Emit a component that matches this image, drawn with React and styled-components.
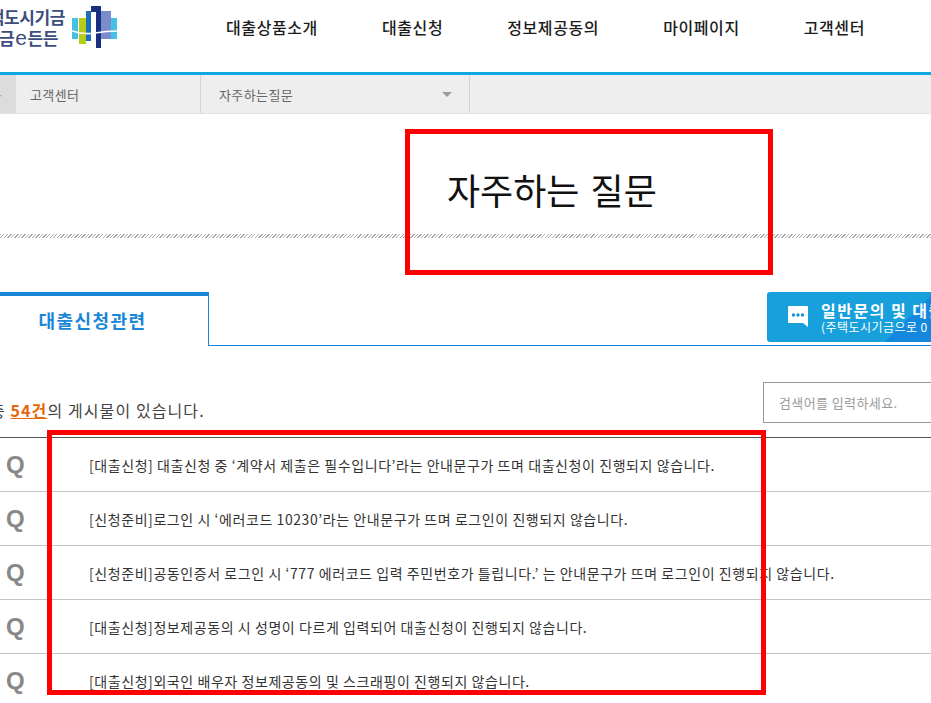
import React from "react";
import styled, { createGlobalStyle } from "styled-components";

const Global = createGlobalStyle`
  html, body { margin: 0; padding: 0; background: #fff; }
  body { font-family: "Noto Sans CJK KR", "Noto Sans", sans-serif; color: #222; }
`;
const Page = styled.div`
  position: relative;
  width: 931px;
  height: 703px;
  overflow: hidden;
  background: #fff;
`;
const Header = styled.header`
  display: flex;
  align-items: center;
  height: 75px;
  box-sizing: border-box;
  border-bottom: 3px solid #0fa9df;
  white-space: nowrap;
`;
const Logo = styled.div`
  display: flex;
  align-items: center;
  gap: 7px;
  width: 226px;
  flex: none;
  height: 72px;
  padding-bottom: 18px;
  box-sizing: border-box;
`;
const LogoText = styled.div`
  width: 65px;
  overflow: hidden;
  font-size: 17px;
  line-height: 21px;
  font-weight: 700;
  letter-spacing: -0.4px;
  color: #3c4d7e;
`;
const LogoLine = styled.div`
  white-space: nowrap;
  display: flex;
  justify-content: flex-end;
  padding-right: ${(p) => p.$inset}px;
`;
const LogoE = styled.span`
  font-family: "Liberation Sans", sans-serif;
  font-size: 21px;
  line-height: 21px;
  font-weight: 400;
  margin: 0 1px;
`;
const Nav = styled.nav`
  display: flex;
  gap: 64px;
  padding-bottom: 18px;
`;
const NavItem = styled.a`
  font-size: 16px;
  font-weight: 500;
  color: #1c1c1c;
  letter-spacing: 0.6px;
`;
const Crumbs = styled.div`
  display: flex;
  height: 39px;
  background: #eeeeee;
  border-bottom: 1px solid #e2e2e2;
  box-sizing: border-box;
`;
const HomeCell = styled.div`
  width: 16px;
  background: #dcdcdc;
  position: relative;
  &::after {
    content: "";
    position: absolute;
    left: -2px;
    top: 20px;
    border: 2px solid transparent;
    border-top-color: #aaa;
  }
`;
const CrumbCell = styled.div`
  display: flex;
  align-items: center;
  justify-content: space-between;
  box-sizing: border-box;
  width: ${(p) => p.$w}px;
  padding: 0 17px 0 ${(p) => p.$pad}px;
  border-right: 1px solid #d4d4d4;
  font-size: 13px;
  letter-spacing: 0.4px;
  color: #666;
`;
const Caret = styled.span`
  width: 0;
  height: 0;
  border: 5px solid transparent;
  border-top: 5px solid #9c9c9c;
  border-bottom: 0;
`;
const TitleArea = styled.div`
  height: 120px;
  padding-left: 447px;
  box-sizing: border-box;
  display: flex;
  align-items: center;
`;
const Title = styled.h1`
  margin: 0;
  font-size: 36px;
  font-weight: 400;
  color: #111;
  line-height: 1;
  word-spacing: 3px;
  padding-top: 30px;
`;
const Dotted = styled.div`
  height: 4px;
  background: repeating-linear-gradient(135deg, #aaa 0 1px, #fff 1px 2.5px);
`;
const TabRow = styled.div`
  display: flex;
  justify-content: space-between;
  height: 54px;
  margin-top: 54px;
  border-bottom: 1px solid #1a86d8;
  box-sizing: border-box;
`;
const Tab = styled.div`
  width: 209px;
  height: 54px;
  box-sizing: border-box;
  border-top: 4px solid #1a86d8;
  border-right: 1px solid #1a86d8;
  background: #fff;
  display: flex;
  align-items: center;
  justify-content: center;
  padding-right: 23px;
  padding-bottom: 2px;
  font-size: 18px;
  font-weight: 700;
  letter-spacing: 1.4px;
  color: #1a86d8;
`;
const ContactButton = styled.div`
  width: 220px;
  margin-right: -56px;
  height: 50px;
  flex: none;
  border-radius: 3px;
  background: linear-gradient(135deg, #17a0dc 0 62%, #1488dc 62%);
  display: flex;
  align-items: center;
  gap: 12px;
  padding-left: 20px;
  box-sizing: border-box;
  color: #fff;
  white-space: nowrap;
`;
const ContactText = styled.div`
  display: flex;
  flex-direction: column;
`;
const ContactMain = styled.span`
  font-size: 16px;
  font-weight: 700;
  line-height: 20px;
  letter-spacing: 1.5px;
`;
const ContactSub = styled.span`
  font-size: 12px;
  line-height: 14px;
  letter-spacing: 0.45px;
`;
const Toolbar = styled.div`
  display: flex;
  justify-content: space-between;
  align-items: flex-end;
  height: 92px;
  padding-bottom: 14px;
  box-sizing: border-box;
  border-bottom: 1px solid #555;
`;
const Count = styled.div`
  margin-left: -10px;
  font-size: 16px;
  line-height: 20px;
  color: #444;
  white-space: nowrap;
  padding-bottom: 3px;
  letter-spacing: 1.1px;
`;
const CountNum = styled.b`
  color: #e8650a;
  font-weight: 700;
  text-decoration: underline;
`;
const Search = styled.div`
  width: 200px;
  margin-right: -32px;
  height: 41px;
  box-sizing: border-box;
  border: 1px solid #999;
  display: flex;
  align-items: center;
  padding-left: 15px;
  font-size: 13px;
  letter-spacing: 0.4px;
  color: #9a9a9a;
  flex: none;
`;
const Row = styled.div`
  display: flex;
  align-items: center;
  height: 54px;
  box-sizing: border-box;
  border-bottom: 1px solid #c4c4c4;
  white-space: nowrap;
`;
const Q = styled.span`
  width: 89px;
  flex: none;
  padding-left: 6px;
  box-sizing: border-box;
  font-family: "Liberation Sans", sans-serif;
  font-size: 24px;
  font-weight: 700;
  color: #888;
`;
const RowText = styled.span`
  font-size: 14px;
  letter-spacing: 0.57px;
  color: #333;
`;
const Mark = styled.div`
  position: absolute;
  left: ${(p) => p.$x}px;
  top: ${(p) => p.$y}px;
  width: ${(p) => p.$w}px;
  height: ${(p) => p.$h}px;
  box-sizing: border-box;
  border: 5px solid #ff0000;
  pointer-events: none;
`;

const rows = [
  "[대출신청] 대출신청 중 ‘계약서 제출은 필수입니다’라는 안내문구가 뜨며 대출신청이 진행되지 않습니다.",
  "[신청준비]로그인 시 ‘에러코드 10230’라는 안내문구가 뜨며 로그인이 진행되지 않습니다.",
  "[신청준비]공동인증서 로그인 시 ‘777 에러코드 입력 주민번호가 틀립니다.’ 는 안내문구가 뜨며 로그인이 진행되지 않습니다.",
  "[대출신청]정보제공동의 시 성명이 다르게 입력되어 대출신청이 진행되지 않습니다.",
  "[대출신청]외국인 배우자 정보제공동의 및 스크래핑이 진행되지 않습니다.",
];
const menu = ["대출상품소개", "대출신청", "정보제공동의", "마이페이지", "고객센터"];

const LogoMark = () => (
  <svg width="46" height="42" viewBox="0 0 46 42">
    <rect x="0" y="12" width="6" height="21" fill="#45c1e4" />
    <rect x="7" y="12" width="7" height="26" fill="#b5cd14" />
    <rect x="14" y="5" width="5" height="30" fill="#1c6fb8" />
    <rect x="19" y="0" width="10" height="6" fill="#1b2f82" />
    <rect x="24" y="6" width="5" height="36" fill="#1b2f82" />
    <rect x="29" y="5" width="10" height="28" fill="#7b8ccb" />
    <rect x="39" y="12" width="6" height="21" fill="#45c1e4" />
    <path d="M0 25 Q12 29 23 27 T46 25" fill="none" stroke="#fff" strokeWidth="1.6" />
  </svg>
);

const ChatIcon = () => (
  <svg width="22" height="24" viewBox="0 0 22 24">
    <path d="M2 1h18a1 1 0 0 1 1 1v20l-5-4H2a1 1 0 0 1-1-1V2a1 1 0 0 1 1-1z" fill="#fff" />
    <circle cx="6.5" cy="10" r="1.7" fill="#1793d6" />
    <circle cx="11" cy="10" r="1.7" fill="#1793d6" />
    <circle cx="15.5" cy="10" r="1.7" fill="#1793d6" />
  </svg>
);

export default function App() {
  return (
    <Page>
      <Global />
      <Header>
        <Logo>
          <LogoText>
            <LogoLine $inset={0}>택도시기금</LogoLine>
            <LogoLine $inset={7}>금<LogoE>e</LogoE>든든</LogoLine>
          </LogoText>
          <LogoMark />
        </Logo>
        <Nav>
          {menu.map((m) => (
            <NavItem key={m}>{m}</NavItem>
          ))}
        </Nav>
      </Header>
      <Crumbs>
        <HomeCell />
        <CrumbCell $w={185} $pad={14}>고객센터</CrumbCell>
        <CrumbCell $w={269} $pad={18}>
          자주하는질문
          <Caret />
        </CrumbCell>
      </Crumbs>
      <TitleArea>
        <Title>자주하는 질문</Title>
      </TitleArea>
      <Dotted />
      <TabRow>
        <Tab>대출신청관련</Tab>
        <ContactButton>
          <ChatIcon />
          <ContactText>
            <ContactMain>일반문의 및 대출상담</ContactMain>
            <ContactSub>(주택도시기금으로 0</ContactSub>
          </ContactText>
        </ContactButton>
      </TabRow>
      <Toolbar>
        <Count>
          총 <CountNum>54건</CountNum>의 게시물이 있습니다.
        </Count>
        <Search>검색어를 입력하세요.</Search>
      </Toolbar>
      {rows.map((r) => (
        <Row key={r}>
          <Q>Q</Q>
          <RowText>{r}</RowText>
        </Row>
      ))}
      <Mark $x={405} $y={129} $w={368} $h={146} />
      <Mark $x={47} $y={430} $w={719} $h={265} />
    </Page>
  );
}
